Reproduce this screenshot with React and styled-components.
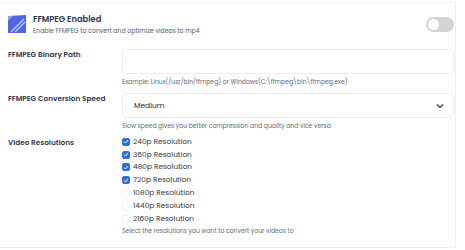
import styled, { createGlobalStyle } from "styled-components";

const GlobalStyle = createGlobalStyle`
    body {
        margin: 0;
        background: #fff;
        font-family: Poppins, "Open Sans", "Liberation Sans", sans-serif;
    }
`;

const resolutions = [
    { label: "240p Resolution", checked: true },
    { label: "360p Resolution", checked: true },
    { label: "480p Resolution", checked: true },
    { label: "720p Resolution", checked: true },
    { label: "1080p Resolution", checked: false },
    { label: "1440p Resolution", checked: false },
    { label: "2160p Resolution", checked: false },
];

const Logo = () => (
    <svg width="18" height="18" viewBox="0 0 18 18">
        <path d="M0 1 L18 0 L18 18 L0 18 Z" fill="#4f67e3"/>
        <path d="M0 1 L5 1 L0 6 Z" fill="#8fa0f0"/>
        <path d="M3 17 L16 4" stroke="#c6cff8" strokeWidth="1.2"/>
        <path d="M7 17 L17 7" stroke="#c6cff8" strokeWidth="1.2"/>
    </svg>
);

const Check = () => (
    <svg width="7" height="7" viewBox="0 0 8 8">
        <path d="M1.5 4.2 L3.3 6 L6.6 2" stroke="#fff" strokeWidth="1.3" fill="none"/>
    </svg>
);

const App = () => {
    return (
        <>
            <GlobalStyle/>
            <Card>
                <Header>
                    <Logo/>
                    <HeaderText>
                        <Title>FFMPEG Enabled</Title>
                        <Hint>Enable FFMPEG to convert and optimize videos to mp4</Hint>
                    </HeaderText>
                    <Toggle/>
                </Header>

                <Row>
                    <Label>FFMPEG Binary Path</Label>
                    <Field>
                        <Input/>
                        <Help>Example: Linux(/usr/bin/ffmpeg) or Windows(C:\ffmpeg\bin\ffmpeg.exe)</Help>
                    </Field>
                </Row>

                <Row>
                    <Label>FFMPEG Conversion Speed</Label>
                    <Field>
                        <Select>
                            <span>Medium</span>
                            <svg width="8" height="6" viewBox="0 0 8 6">
                                <path d="M1 1.5 L4 4.5 L7 1.5" stroke="#333" strokeWidth="1.2" fill="none"/>
                            </svg>
                        </Select>
                        <Help>Slow speed gives you better compression and quality and vice versa</Help>
                    </Field>
                </Row>

                <Row>
                    <Label>Video Resolutions</Label>
                    <Field>
                        <CheckList>
                            {resolutions.map(r => (
                                <CheckRow key={r.label}>
                                    <Box checked={r.checked}>{r.checked && <Check/>}</Box>
                                    {r.label}
                                </CheckRow>
                            ))}
                        </CheckList>
                        <Help>Select the resolutions you want to convert your videos to</Help>
                    </Field>
                </Row>
            </Card>
        </>
    )
}

const Card = styled.div`
    width: 456px;
    height: 246px;
    margin-top: 2px;
    box-sizing: border-box;
    border-top: 1px solid #f3f3f5;
    border-bottom: 1px solid #eeeef1;
    border-right: 1px solid #ededf0;
    padding: 10px 1px 0 8px;
`;

const Header = styled.div`
    display: flex;
    align-items: center;
    gap: 7px;
    height: 22px;
    margin-bottom: 14px;
`;

const HeaderText = styled.div`
    display: flex;
    flex-direction: column;
    gap: 0;
    flex: 1;
`;

const Title = styled.span`
    font-size: 8.3px;
    font-weight: 600;
    color: #2c3550;
`;

const Hint = styled.span`
    font-size: 6.2px;
    color: #555a66;
`;

const Toggle = styled.div`
    width: 28px;
    height: 15px;
    border-radius: 8px;
    background: #d4d4d6;
    position: relative;
    flex-shrink: 0;

    &::after {
        content: "";
        position: absolute;
        left: 2px;
        top: 2px;
        width: 11px;
        height: 11px;
        border-radius: 50%;
        background: #fff;
    }
`;

const Row = styled.div`
    display: grid;
    grid-template-columns: 114px 1fr;
    margin-bottom: 6px;
`;

const Label = styled.div`
    font-size: 7.3px;
    font-weight: 600;
    color: #2c3550;
`;

const Field = styled.div`
    display: flex;
    flex-direction: column;
`;

const Input = styled.div`
    height: 25px;
    box-sizing: border-box;
    border: 1px solid #ececf0;
    border-radius: 4px;
`;

const Select = styled.div`
    height: 25px;
    box-sizing: border-box;
    border: 1px solid #ececf0;
    border-radius: 4px;
    display: flex;
    align-items: center;
    justify-content: space-between;
    padding: 0 9px 0 11px;
    font-size: 7.5px;
    color: #222;
`;

const Help = styled.div`
    font-size: 6.1px;
    color: #666a72;
    margin-top: 4px;
`;

const CheckList = styled.div`
    display: flex;
    flex-direction: column;
    gap: 3.3px;
`;

const CheckRow = styled.div`
    display: flex;
    align-items: center;
    gap: 3px;
    font-size: 7.4px;
    color: #333;
    height: 9.5px;
`;

const Box = styled.div`
    width: 8px;
    height: 8px;
    border-radius: 2px;
    box-sizing: border-box;
    display: flex;
    align-items: center;
    justify-content: center;
    background: ${props => props.checked ? "#2e6fdc" : "#fff"};
    border: 1px solid ${props => props.checked ? "#2e6fdc" : "#f0f0f2"};
`;

export default App;
